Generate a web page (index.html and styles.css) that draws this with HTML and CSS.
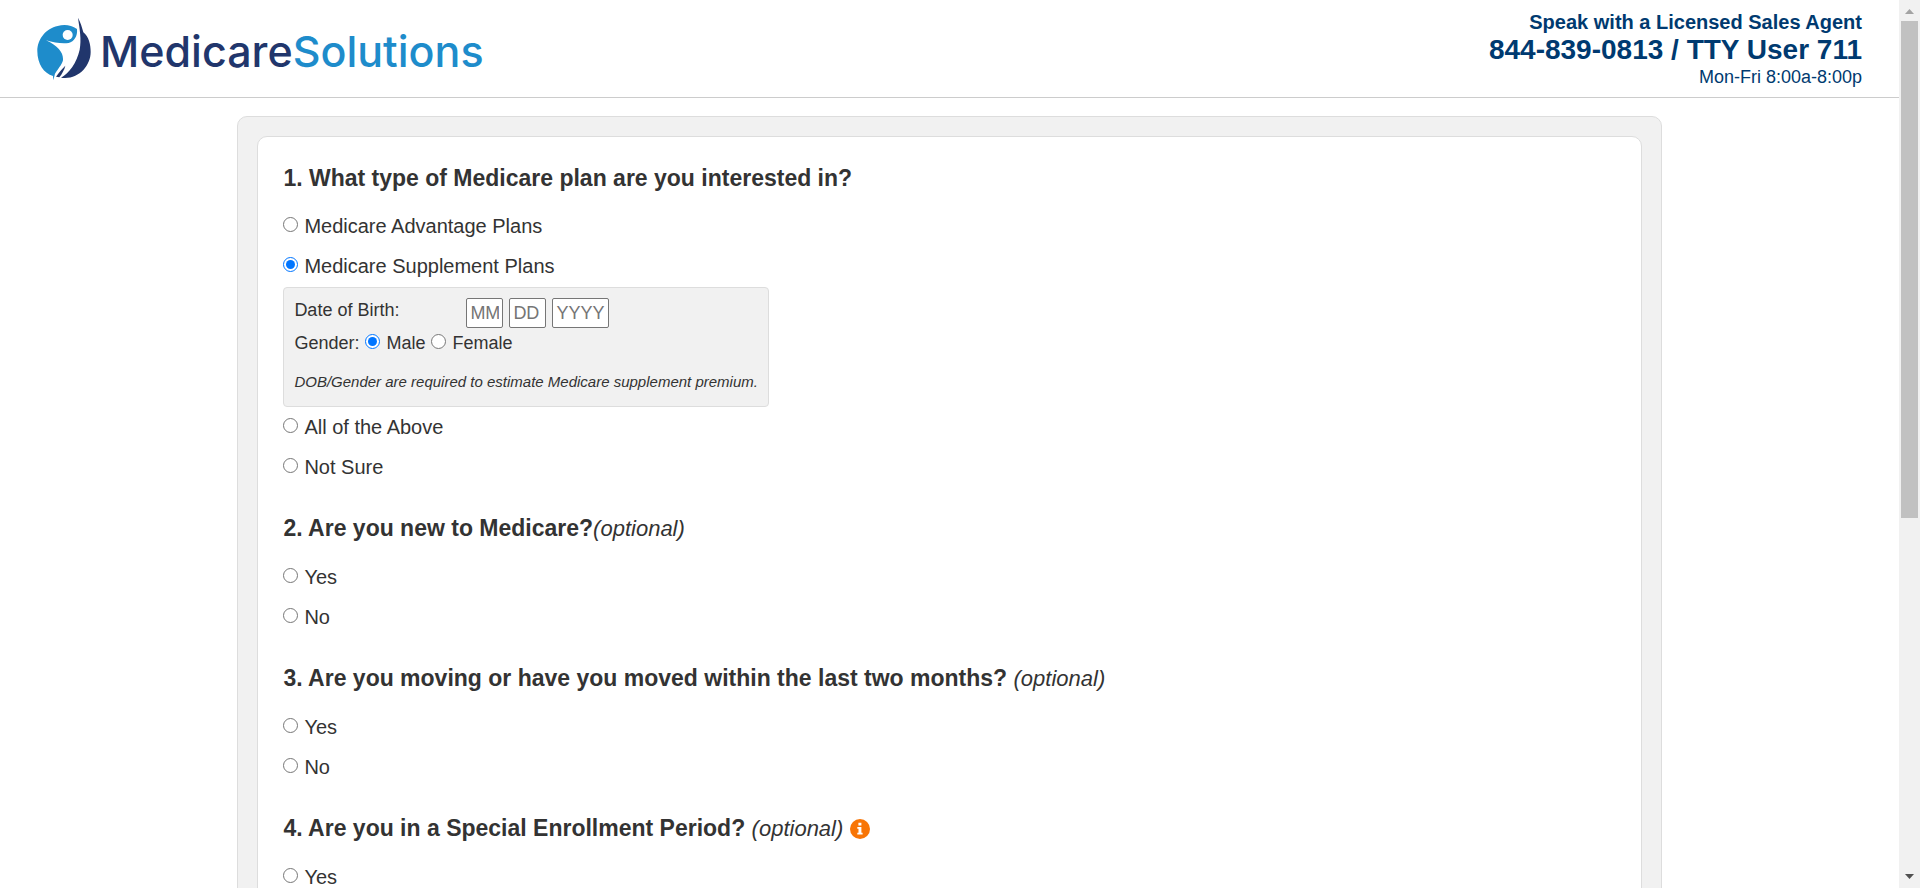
FILE: index.html
```html
<!DOCTYPE html>
<html lang="en">
<head>
<meta charset="utf-8">
<title>MedicareSolutions</title>
<link rel="stylesheet" href="styles.css">
</head>
<body>
<div class="window">
  <div class="page">
    <header class="header">
      <a class="logo" href="#">
        <svg class="logo-mark" viewBox="23 22 165 192" aria-hidden="true">
          <path fill="#1e8ccb" d="M143 58C125 45 104 43 85 49C50 56 24 88 24 125C24 163 44 192 71 199L72 212L77 192C88 174 103 158 101 147C101 128 85 108 50 92C75 99 98 103 118 100C135 95 145 80 143 58Z"/>
          <circle cx="115" cy="76" r="15" fill="#fff"/>
          <path fill="#21366c" d="M146 24C154 40 158 52 162 68C178 80 184 105 184 127C184 170 145 212 95 204C120 190 142 160 151 120C157 88 151 60 146 24Z"/>
          <path fill="#21366c" d="M80 201C90 186 98 178 108 168C105 181 98 192 90 203Z"/>
        </svg>
        <span class="logo-text">Medicare<span class="logo-accent">Solutions</span></span>
      </a>
      <div class="contact">
        <div class="contact-title">Speak with a Licensed Sales Agent</div>
        <div class="contact-phone">844-839-0813 / TTY User 711</div>
        <div class="contact-hours">Mon-Fri 8:00a-8:00p</div>
      </div>
    </header>
    <main class="panel">
      <form class="card">
        <section class="question" role="radiogroup" aria-labelledby="q1">
          <h2 class="title" id="q1">1. What type of Medicare plan are you interested in?</h2>
          <label class="option"><input class="radio" type="radio" name="plan">Medicare Advantage Plans</label>
          <label class="option"><input class="radio" type="radio" name="plan" checked>Medicare Supplement Plans</label>
          <div class="details">
            <div class="dob">
              <label class="dob-label" for="month">Date of Birth:</label>
              <div class="dob-fields">
                <input class="field" id="month" type="text" placeholder="MM" maxlength="2">
                <input class="field" type="text" placeholder="DD" maxlength="2" aria-label="Day">
                <input class="field field-year" type="text" placeholder="YYYY" maxlength="4" aria-label="Year">
              </div>
            </div>
            <div class="gender" role="radiogroup" aria-label="Gender">
              <span>Gender:</span>
              <label class="gender-option"><input class="radio" type="radio" name="gender" checked>Male</label>
              <label class="gender-option"><input class="radio" type="radio" name="gender">Female</label>
            </div>
            <p class="note">DOB/Gender are required to estimate Medicare supplement premium.</p>
          </div>
          <label class="option"><input class="radio" type="radio" name="plan">All of the Above</label>
          <label class="option"><input class="radio" type="radio" name="plan">Not Sure</label>
        </section>
        <section class="question" role="radiogroup" aria-labelledby="q2">
          <h2 class="title" id="q2">2. Are you new to Medicare?<em class="optional">(optional)</em></h2>
          <label class="option"><input class="radio" type="radio" name="new">Yes</label>
          <label class="option"><input class="radio" type="radio" name="new">No</label>
        </section>
        <section class="question" role="radiogroup" aria-labelledby="q3">
          <h2 class="title" id="q3">3. Are you moving or have you moved within the last two months? <em class="optional">(optional)</em></h2>
          <label class="option"><input class="radio" type="radio" name="moving">Yes</label>
          <label class="option"><input class="radio" type="radio" name="moving">No</label>
        </section>
        <section class="question" role="radiogroup" aria-labelledby="q4">
          <h2 class="title" id="q4">4. Are you in a Special Enrollment Period? <em class="optional">(optional)</em>
            <svg class="info" viewBox="0 0 20 20" aria-hidden="true"><circle cx="10" cy="10" r="10" fill="#f87506"/><path fill="#fff" d="M8.4 3.8h3v2.8h-3zM7.3 8h4.1v5.8h1.2v1.8H7.3v-1.8h1.2V9.8H7.3z"/></svg>
          </h2>
          <label class="option"><input class="radio" type="radio" name="period">Yes</label>
        </section>
      </form>
    </main>
  </div>
  <div class="scrollbar" aria-hidden="true">
    <svg class="arrow" viewBox="0 0 21 21"><path fill="#a3a3a3" d="M6 14h9l-4.500-5z"/></svg>
    <div class="track"><div class="thumb"></div></div>
    <svg class="arrow" viewBox="0 0 21 21"><path fill="#505050" d="M6 7h9l-4.500 5z"/></svg>
  </div>
</div>
</body>
</html>
```
FILE: styles.css
```css
* {
  box-sizing: border-box;
}

body {
  margin: 0;
  background: #fff;
  color: #333;
  font-family: "Liberation Sans", Arial, sans-serif;
  font-size: 20px;
}

.window {
  display: flex;
  height: 100vh;
}

.page {
  flex: 1;
  min-width: 0;
  overflow: hidden;
}

.header {
  display: flex;
  justify-content: space-between;
  align-items: flex-start;
  padding: 10px 37px 8px;
  border-bottom: 1px solid #ccc;
}

.logo {
  display: flex;
  align-items: center;
  gap: 8px;
  padding-top: 7px;
  color: #21366c;
  text-decoration: none;
}

.logo-mark {
  width: 55px;
  height: 64px;
}

.logo-text {
  padding-top: 4px;
  font-family: Inter, sans-serif;
  font-size: 43px;
  font-weight: 500;
  line-height: 60px;
}

.logo-accent {
  color: #1e8ccb;
}

.contact {
  color: #003a70;
  text-align: right;
}

.contact-title {
  font-weight: bold;
  line-height: 24px;
}

.contact-phone {
  font-size: 28px;
  font-weight: bold;
  line-height: 31px;
}

.contact-hours {
  font-size: 18px;
  line-height: 24px;
}

.panel {
  width: 75%;
  margin: 18px auto;
  padding: 19px;
  border: 1px solid #ddd;
  border-radius: 10px;
  background: #f1f1f1;
}

.card {
  padding: 27px 25px;
  border: 1px solid #ddd;
  border-radius: 10px;
  background: #fff;
}

.title {
  margin: 0 0 14px;
  font-size: 23px;
  line-height: 28px;
}

.question + .question {
  margin-top: 27px;
}

.optional {
  font-size: 22px;
  font-weight: normal;
}

.info {
  width: 20px;
  height: 20px;
  vertical-align: -3px;
}

.option {
  display: flex;
  align-items: center;
  gap: 6px;
  width: fit-content;
  line-height: 40px;
}

.radio {
  width: 15px;
  height: 15px;
  margin: 0 0 4px;
}

.details {
  width: fit-content;
  margin-top: 1px;
  padding: 10px 10px 12px;
  border: 1px solid #ddd;
  border-radius: 4px;
  background: #f1f1f1;
  font-size: 18px;
}

.dob {
  display: flex;
}

.dob-label {
  width: 172px;
  line-height: 24px;
}

.dob-fields {
  display: flex;
  gap: 6px;
}

.field {
  width: 37px;
  height: 30px;
  padding: 1px 3px;
  border: 1px solid #767676;
  border-radius: 2px;
  font: inherit;
}

.field-year {
  width: 57px;
}

.gender {
  display: flex;
  gap: 6px;
  line-height: 30px;
}

.gender-option {
  display: flex;
  align-items: center;
  gap: 6px;
}

.note {
  margin: 12px 0 0;
  font-size: 15px;
  font-style: italic;
  line-height: 24px;
}

.scrollbar {
  display: flex;
  flex-direction: column;
  width: 21px;
  background: #f1f1f1;
}

.arrow {
  height: 21px;
}

.track {
  flex: 1;
  padding: 0 2px;
}

.thumb {
  height: 58.75%;
  background: #c1c1c1;
}
```
